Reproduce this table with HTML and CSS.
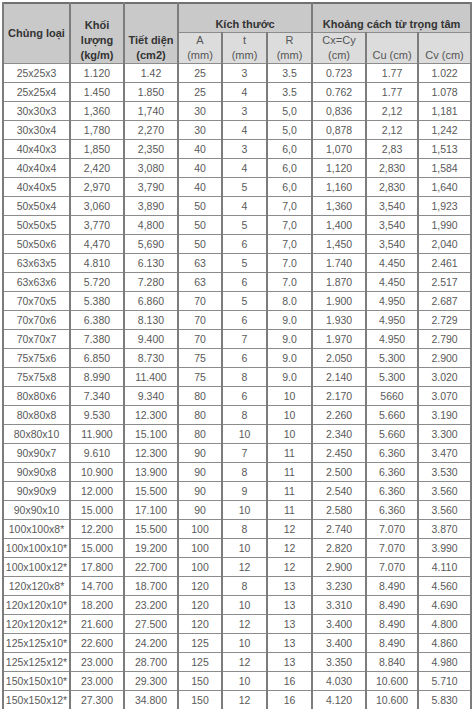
FILE: index.html
```html
<!DOCTYPE html>
<html lang="vi">
<head>
<meta charset="utf-8">
<title>Bảng tra thép góc</title>
<link rel="stylesheet" href="styles.css">
</head>
<body>
<table class="spec">
<colgroup>
<col class="c1"><col class="c2"><col class="c3"><col class="c4"><col class="c5"><col class="c6"><col class="c7"><col class="c8"><col class="c9">
</colgroup>
<thead>
<tr class="h1">
<th rowspan="2" class="mid">Chủng loại</th>
<th rowspan="2">Khối<br>lượng<br>(kg/m)</th>
<th rowspan="2">Tiết diện<br>(cm2)</th>
<th colspan="3">Kích thước</th>
<th colspan="3">Khoảng cách từ trọng tâm</th>
</tr>
<tr class="h2">
<th class="sub">A<br>(mm)</th>
<th class="sub">t<br>(mm)</th>
<th class="sub">R<br>(mm)</th>
<th class="sub">Cx=Cy<br>(cm)</th>
<th class="sub">Cu (cm)</th>
<th class="sub">Cv (cm)</th>
</tr>
</thead>
<tbody>
<tr><td>25x25x3</td><td>1.120</td><td>1.42</td><td>25</td><td>3</td><td>3.5</td><td>0.723</td><td>1.77</td><td>1.022</td></tr>
<tr><td>25x25x4</td><td>1.450</td><td>1.850</td><td>25</td><td>4</td><td>3.5</td><td>0.762</td><td>1.77</td><td>1.078</td></tr>
<tr><td>30x30x3</td><td>1,360</td><td>1,740</td><td>30</td><td>3</td><td>5,0</td><td>0,836</td><td>2,12</td><td>1,181</td></tr>
<tr><td>30x30x4</td><td>1,780</td><td>2,270</td><td>30</td><td>4</td><td>5,0</td><td>0,878</td><td>2,12</td><td>1,242</td></tr>
<tr><td>40x40x3</td><td>1,850</td><td>2,350</td><td>40</td><td>3</td><td>6,0</td><td>1,070</td><td>2,83</td><td>1,513</td></tr>
<tr><td>40x40x4</td><td>2,420</td><td>3,080</td><td>40</td><td>4</td><td>6,0</td><td>1,120</td><td>2,830</td><td>1,584</td></tr>
<tr><td>40x40x5</td><td>2,970</td><td>3,790</td><td>40</td><td>5</td><td>6,0</td><td>1,160</td><td>2,830</td><td>1,640</td></tr>
<tr><td>50x50x4</td><td>3,060</td><td>3,890</td><td>50</td><td>4</td><td>7,0</td><td>1,360</td><td>3,540</td><td>1,923</td></tr>
<tr><td>50x50x5</td><td>3,770</td><td>4,800</td><td>50</td><td>5</td><td>7,0</td><td>1,400</td><td>3,540</td><td>1,990</td></tr>
<tr><td>50x50x6</td><td>4,470</td><td>5,690</td><td>50</td><td>6</td><td>7,0</td><td>1,450</td><td>3,540</td><td>2,040</td></tr>
<tr><td>63x63x5</td><td>4.810</td><td>6.130</td><td>63</td><td>5</td><td>7.0</td><td>1.740</td><td>4.450</td><td>2.461</td></tr>
<tr><td>63x63x6</td><td>5.720</td><td>7.280</td><td>63</td><td>6</td><td>7.0</td><td>1.870</td><td>4.450</td><td>2.517</td></tr>
<tr><td>70x70x5</td><td>5.380</td><td>6.860</td><td>70</td><td>5</td><td>8.0</td><td>1.900</td><td>4.950</td><td>2.687</td></tr>
<tr><td>70x70x6</td><td>6.380</td><td>8.130</td><td>70</td><td>6</td><td>9.0</td><td>1.930</td><td>4.950</td><td>2.729</td></tr>
<tr><td>70x70x7</td><td>7.380</td><td>9.400</td><td>70</td><td>7</td><td>9.0</td><td>1.970</td><td>4.950</td><td>2.790</td></tr>
<tr><td>75x75x6</td><td>6.850</td><td>8.730</td><td>75</td><td>6</td><td>9.0</td><td>2.050</td><td>5.300</td><td>2.900</td></tr>
<tr><td>75x75x8</td><td>8.990</td><td>11.400</td><td>75</td><td>8</td><td>9.0</td><td>2.140</td><td>5.300</td><td>3.020</td></tr>
<tr><td>80x80x6</td><td>7.340</td><td>9.340</td><td>80</td><td>6</td><td>10</td><td>2.170</td><td>5660</td><td>3.070</td></tr>
<tr><td>80x80x8</td><td>9.530</td><td>12.300</td><td>80</td><td>8</td><td>10</td><td>2.260</td><td>5.660</td><td>3.190</td></tr>
<tr><td>80x80x10</td><td>11.900</td><td>15.100</td><td>80</td><td>10</td><td>10</td><td>2.340</td><td>5.660</td><td>3.300</td></tr>
<tr><td>90x90x7</td><td>9.610</td><td>12.300</td><td>90</td><td>7</td><td>11</td><td>2.450</td><td>6.360</td><td>3.470</td></tr>
<tr><td>90x90x8</td><td>10.900</td><td>13.900</td><td>90</td><td>8</td><td>11</td><td>2.500</td><td>6.360</td><td>3.530</td></tr>
<tr><td>90x90x9</td><td>12.000</td><td>15.500</td><td>90</td><td>9</td><td>11</td><td>2.540</td><td>6.360</td><td>3.560</td></tr>
<tr><td>90x90x10</td><td>15.000</td><td>17.100</td><td>90</td><td>10</td><td>11</td><td>2.580</td><td>6.360</td><td>3.560</td></tr>
<tr><td>100x100x8*</td><td>12.200</td><td>15.500</td><td>100</td><td>8</td><td>12</td><td>2.740</td><td>7.070</td><td>3.870</td></tr>
<tr><td>100x100x10*</td><td>15.000</td><td>19.200</td><td>100</td><td>10</td><td>12</td><td>2.820</td><td>7.070</td><td>3.990</td></tr>
<tr><td>100x100x12*</td><td>17.800</td><td>22.700</td><td>100</td><td>12</td><td>12</td><td>2.900</td><td>7.070</td><td>4.110</td></tr>
<tr><td>120x120x8*</td><td>14.700</td><td>18.700</td><td>120</td><td>8</td><td>13</td><td>3.230</td><td>8.490</td><td>4.560</td></tr>
<tr><td>120x120x10*</td><td>18.200</td><td>23.200</td><td>120</td><td>10</td><td>13</td><td>3.310</td><td>8.490</td><td>4.690</td></tr>
<tr><td>120x120x12*</td><td>21.600</td><td>27.500</td><td>120</td><td>12</td><td>13</td><td>3.400</td><td>8.490</td><td>4.800</td></tr>
<tr><td>125x125x10*</td><td>22.600</td><td>24.200</td><td>125</td><td>10</td><td>13</td><td>3.400</td><td>8.490</td><td>4.860</td></tr>
<tr><td>125x125x12*</td><td>23.000</td><td>28.700</td><td>125</td><td>12</td><td>13</td><td>3.350</td><td>8.840</td><td>4.980</td></tr>
<tr><td>150x150x10*</td><td>23.000</td><td>29.300</td><td>150</td><td>10</td><td>16</td><td>4.030</td><td>10.600</td><td>5.710</td></tr>
<tr><td>150x150x12*</td><td>27.300</td><td>34.800</td><td>150</td><td>12</td><td>16</td><td>4.120</td><td>10.600</td><td>5.830</td></tr>
</tbody>
</table>
</body>
</html>
```
FILE: styles.css
```css
html, body {
  margin: 0;
  padding: 0;
  background: #ffffff;
}
body {
  padding: 2px 0 0 2px;
  font-family: "Liberation Sans", Arial, sans-serif;
}
.spec {
  border-collapse: collapse;
  table-layout: fixed;
  width: 470px;
  border: 2px solid #707070;
}
.c1 { width: 67px; }
.c2 { width: 54px; }
.c3 { width: 54px; }
.c4 { width: 44px; }
.c5 { width: 45px; }
.c6 { width: 45px; }
.c7 { width: 54px; }
.c8 { width: 52px; }
.c9 { width: 53px; }
.spec th,
.spec td {
  border-left: 2px solid #7c7c7c;
  border-right: 2px solid #7c7c7c;
  border-top: 1px solid #8c8c8c;
  border-bottom: 1px solid #8c8c8c;
  text-align: center;
  padding: 0;
  white-space: nowrap;
}
.spec th {
  background: #c9c9c9;
  color: #333333;
  font-size: 11px;
  font-weight: bold;
  line-height: 15px;
  vertical-align: bottom;
}
.spec th.mid {
  vertical-align: middle;
}
.h1 th { height: 28px; }
.h2 th { height: 30px; }
.spec th.sub {
  background: #dcdcdc;
  color: #555555;
  font-weight: normal;
}
.spec td {
  color: #595959;
  font-size: 10.5px;
  line-height: 18px;
  height: 18px;
}
```
